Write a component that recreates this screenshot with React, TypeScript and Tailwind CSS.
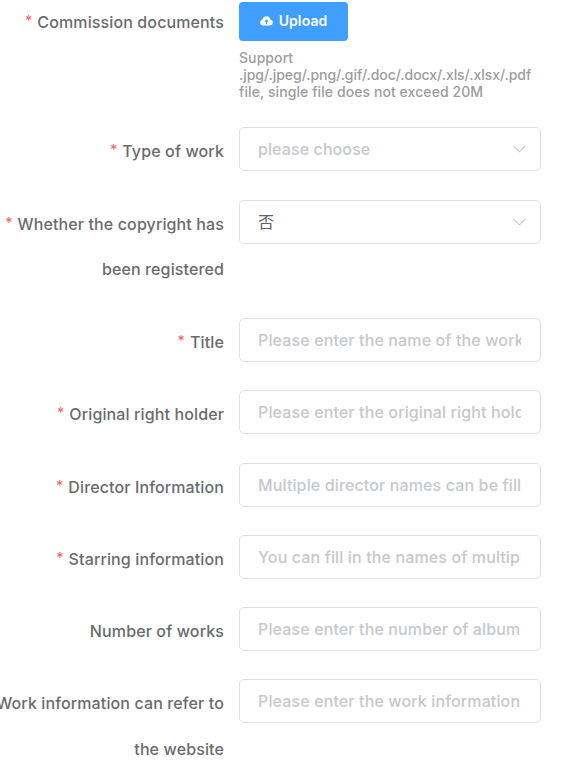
import type { ReactNode } from 'react';

type RowProps = {
  label: string[];
  required?: boolean;
  className?: string;
  children: ReactNode;
};

function Row({ label, required = false, className = '', children }: RowProps) {
  return (
    <div className={`flex items-start ${className}`}>
      <div className="flex w-[224px] shrink-0 flex-col items-end whitespace-nowrap pt-[2px] text-[16px] font-medium leading-[45.5px] tracking-[0.12px] text-[#696b6e]">
        {label.map((line, i) => (
          <div key={line} className="flex">
            {required && i === 0 && (
              <span className="mr-[5px] text-[14px] font-medium leading-[42px] text-[#f56c6c]">*</span>
            )}
            <span>{line}</span>
          </div>
        ))}
      </div>
      <div className="ml-[15px] w-[302px] shrink-0">{children}</div>
    </div>
  );
}

function TextField({ placeholder }: { placeholder: string }) {
  return (
    <div className="flex h-11 items-center rounded-[5px] border border-[#dfe1e6] bg-white pl-[18px] pr-[19px]">
      <input
        className="w-full min-w-0 bg-transparent text-[16px] font-medium tracking-[0.13px] text-[#606266] outline-none placeholder:text-[#c5c8ce]"
        placeholder={placeholder}
      />
    </div>
  );
}

function SelectField({ value, placeholder }: { value?: string; placeholder?: string }) {
  return (
    <div className="flex h-11 items-center justify-between rounded-[5px] border border-[#dfe1e6] bg-white pl-[18px] pr-[14px] text-[16px] tracking-[0.1px]">
      {value ? (
        <span className="text-[#606266]">{value}</span>
      ) : (
        <span className="font-medium text-[#c5c8ce]">{placeholder}</span>
      )}
      <svg width="13" height="8" viewBox="0 0 13 8" fill="none" stroke="#c0c4cc" strokeWidth="1.1">
        <path d="M0.6 0.9 6.5 6.8 12.4 0.9" />
      </svg>
    </div>
  );
}

export default function App() {
  return (
    <div className="h-[769px] w-[573px] overflow-hidden bg-white font-['Inter','Noto_Sans_CJK_SC',sans-serif]">
      <Row label={['Commission documents']} required className="-mt-[2px] h-[129.3px]">
        <button className="mt-1 flex h-[39px] w-[109px] items-center justify-center gap-[6px] rounded-[4px] bg-[#409eff] pb-[2px] text-[14px] font-semibold tracking-[0.1px] text-white">
          <svg width="13" height="11" viewBox="0 0 13 11">
            <path
              fill="white"
              fillRule="evenodd"
              d="M3.2 10.5A3.1 3.1 0 0 1 2.5 4.4 4.1 4.1 0 0 1 10.5 4.4 3.1 3.1 0 0 1 9.8 10.5ZM5.9 9.2H7.1V6.7H8.7L6.5 4.3 4.3 6.7H5.9Z"
            />
          </svg>
          <span>Upload</span>
        </button>
        <div className="mt-[8px] whitespace-nowrap text-[14px] font-medium leading-[17px] tracking-[0.08px] text-[#9b9c9f]">
          <div>Support</div>
          <div className="tracking-[-0.04px]">.jpg/.jpeg/.png/.gif/.doc/.docx/.xls/.xlsx/.pdf</div>
          <div>file, single file does not exceed 20M</div>
        </div>
      </Row>
      <Row label={['Type of work']} required className="h-[72.3px]">
        <SelectField placeholder="please choose" />
      </Row>
      <Row label={['Whether the copyright has', 'been registered']} required className="h-[118.4px]">
        <SelectField value="否" />
      </Row>
      <Row label={['Title']} required className="h-[72.3px]">
        <TextField placeholder="Please enter the name of the work" />
      </Row>
      <Row label={['Original right holder']} required className="h-[72.3px]">
        <TextField placeholder="Please enter the original right holder" />
      </Row>
      <Row label={['Director Information']} required className="h-[72.3px]">
        <TextField placeholder="Multiple director names can be filled in" />
      </Row>
      <Row label={['Starring information']} required className="h-[72.3px]">
        <TextField placeholder="You can fill in the names of multiple stars" />
      </Row>
      <Row label={['Number of works']} className="h-[72.3px]">
        <TextField placeholder="Please enter the number of album" />
      </Row>
      <Row label={['Work information can refer to', 'the website']}>
        <TextField placeholder="Please enter the work information" />
      </Row>
    </div>
  );
}
